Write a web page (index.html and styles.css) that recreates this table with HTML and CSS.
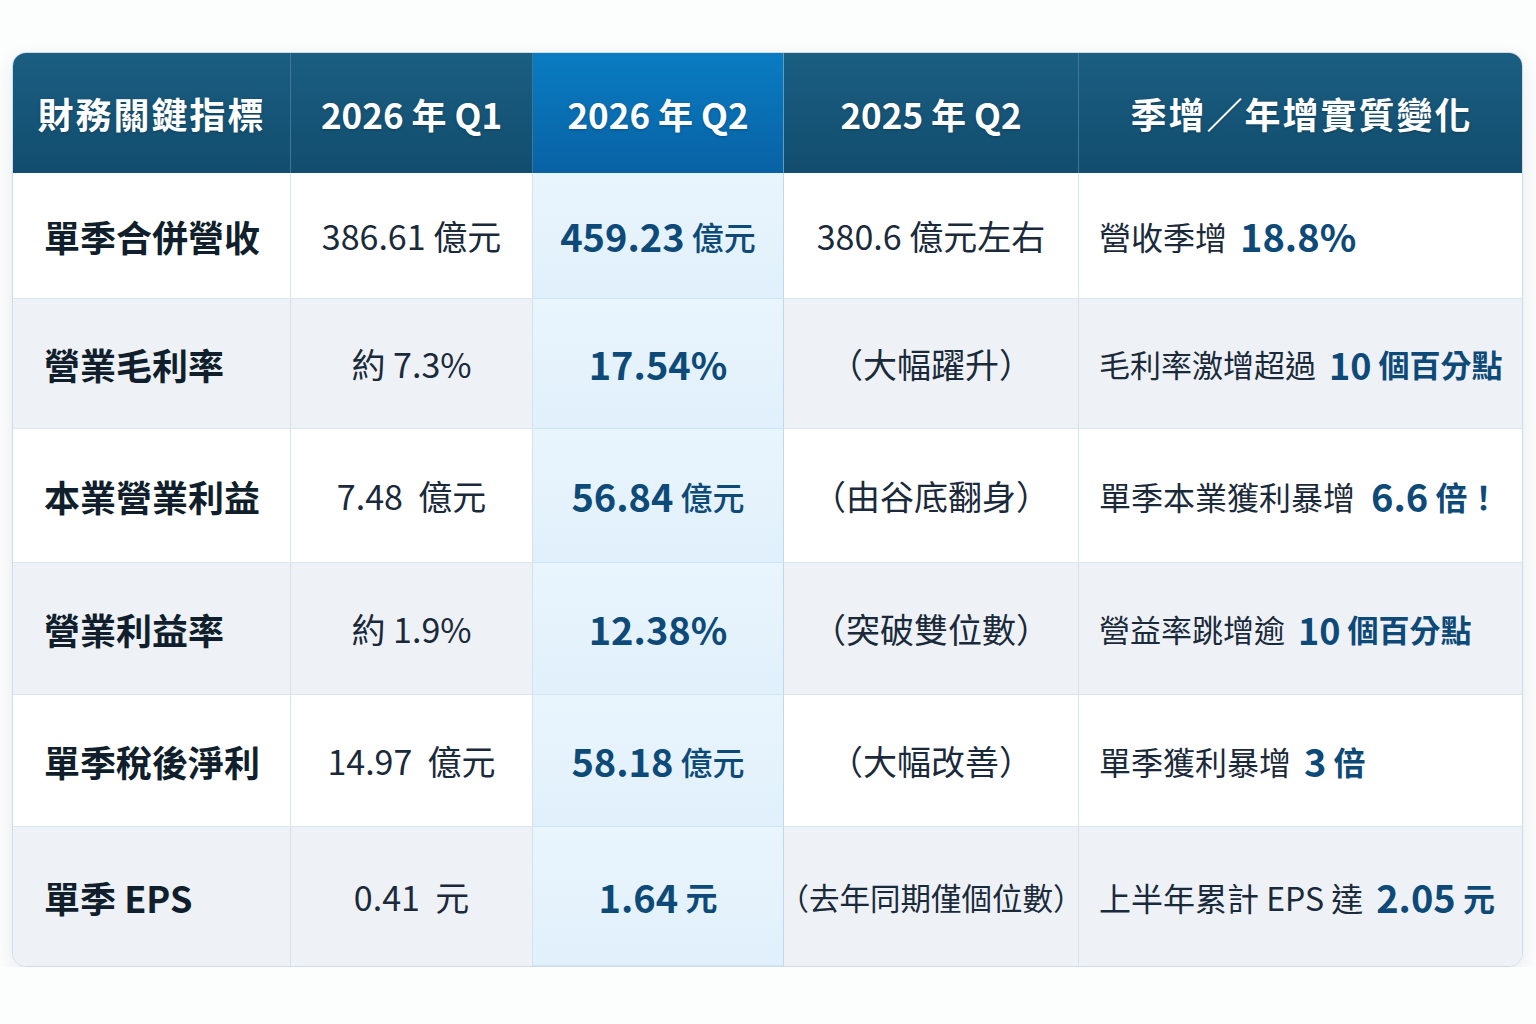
FILE: index.html
```html
<!DOCTYPE html>
<html lang="zh-Hant">
<head>
<meta charset="utf-8">
<title>財務關鍵指標</title>
<link rel="stylesheet" href="styles.css">
</head>
<body>
<div class="table">
  <div class="cell head cjk">財務關鍵指標</div>
  <div class="cell head">2026 年 Q1</div>
  <div class="cell head hl">2026 年 Q2</div>
  <div class="cell head">2025 年 Q2</div>
  <div class="cell head cjk last">季增／年增實質變化</div>

  <div class="cell label r1">單季合併營收</div>
  <div class="cell val r1">386.61 億元</div>
  <div class="cell r1 hlc"><b class="num">459.23</b>&nbsp;<span class="unit">億元</span></div>
  <div class="cell val r1">380.6 億元左右</div>
  <div class="cell note r1 last">營收季增<b class="num gap">18.8%</b></div>

  <div class="cell label r2 alt">營業毛利率</div>
  <div class="cell val r2 alt">約 7.3%</div>
  <div class="cell r2 hlc"><b class="num">17.54%</b></div>
  <div class="cell val r2 alt">（大幅躍升）</div>
  <div class="cell note tight r2 alt last">毛利率激增超過<b class="num sm gap">10</b>&nbsp;<b class="unitb">個百分點</b></div>

  <div class="cell label r3">本業營業利益</div>
  <div class="cell val r3">7.48&nbsp; 億元</div>
  <div class="cell r3 hlc"><b class="num">56.84</b>&nbsp;<span class="unit">億元</span></div>
  <div class="cell val r3">（由谷底翻身）</div>
  <div class="cell note r3 last">單季本業獲利暴增<b class="num gap wide">6.6</b>&nbsp;<b class="unitb">倍！</b></div>

  <div class="cell label r4 alt">營業利益率</div>
  <div class="cell val r4 alt">約 1.9%</div>
  <div class="cell r4 hlc"><b class="num">12.38%</b></div>
  <div class="cell val r4 alt">（突破雙位數）</div>
  <div class="cell note tight r4 alt last">營益率跳增逾<b class="num sm gap">10</b>&nbsp;<b class="unitb">個百分點</b></div>

  <div class="cell label r5">單季稅後淨利</div>
  <div class="cell val r5">14.97&nbsp; 億元</div>
  <div class="cell r5 hlc"><b class="num">58.18</b>&nbsp;<span class="unit">億元</span></div>
  <div class="cell val r5">（大幅改善）</div>
  <div class="cell note r5 last">單季獲利暴增<b class="num gap">3</b>&nbsp;<b class="unitb">倍</b></div>

  <div class="cell label r6 alt">單季 EPS</div>
  <div class="cell val r6 alt">0.41&nbsp; 元</div>
  <div class="cell r6 hlc"><b class="num">1.64</b>&nbsp;<b class="unitb">元</b></div>
  <div class="cell val r6 alt small">（去年同期僅個位數）</div>
  <div class="cell note r6 alt last">上半年累計 EPS 達<b class="num gap">2.05</b>&nbsp;<b class="unitb">元</b></div>
</div>
</body>
</html>
```
FILE: styles.css
```css
html, body {
  margin: 0;
  padding: 0;
  background: #fcfdfd;
}
body {
  padding: 52px 13px 0 12px;
  font-family: "Noto Sans CJK TC", "Noto Sans", sans-serif;
  color: #1b2a3a;
}
.table {
  display: grid;
  grid-template-columns: 278px 242px 251px 295px 445px;
  grid-template-rows: 120px 126px 130px 134px 132px 132px 139px;
  border: 1px solid #cfdbe6;
  border-radius: 14px;
  overflow: hidden;
  box-shadow: 0 6px 18px rgba(40, 70, 100, 0.10);
  background: #fff;
}
.cell {
  display: flex;
  align-items: center;
  justify-content: center;
  font-size: 32px;
  border-right: 1px solid #d6e1eb;
  border-bottom: 1px solid #dde6ee;
  white-space: nowrap;
  background: #ffffff;
}
.cell.last { border-right: none; }
.r6 { border-bottom: none; }
.alt { background: #eef2f6; }
.val { font-size: 34px; }
.val.small { font-size: 30.5px; }
.head {
  background: linear-gradient(180deg, #1a5e82 0%, #124d6e 100%);
  color: #ffffff;
  font-weight: 700;
  font-size: 35px;
  border-right: 1px solid #3f7796;
  border-bottom: none;
  text-shadow: 0 1px 3px rgba(0, 0, 0, 0.25);
}
.head.cjk {
  font-size: 36px;
  letter-spacing: 2px;
}
.head.last { border-right: none; }
.head.hl {
  background: linear-gradient(180deg, #0a7cc2 0%, #0862a4 100%);
  border-right: 1px solid #5a9fcc;
}
.label {
  justify-content: flex-start;
  padding-left: 31px;
  font-weight: 700;
  font-size: 36px;
  color: #111f2c;
}
.hlc {
  background: linear-gradient(180deg, #e9f5fd 0%, #e1f0fb 100%);
  border-right: 1px solid #b9daf1;
  border-bottom: 1px solid #cfe5f5;
  color: #0e4a78;
}
.note {
  justify-content: flex-start;
  padding-left: 20px;
  font-size: 32px;
}
.note.tight { font-size: 31px; }
.num {
  font-weight: 700;
  font-size: 38px;
  color: #0e4a78;
}
.num.gap { margin-left: 13px; }
.num.wide { margin-left: 16px; }
.num.sm { font-size: 36px; }
.unit {
  font-size: 32px;
  color: #0e4a78;
  font-weight: 500;
}
.unitb {
  font-size: 32px;
  font-weight: 700;
  color: #0e4a78;
}
.tight .unitb { font-size: 31px; }
```
